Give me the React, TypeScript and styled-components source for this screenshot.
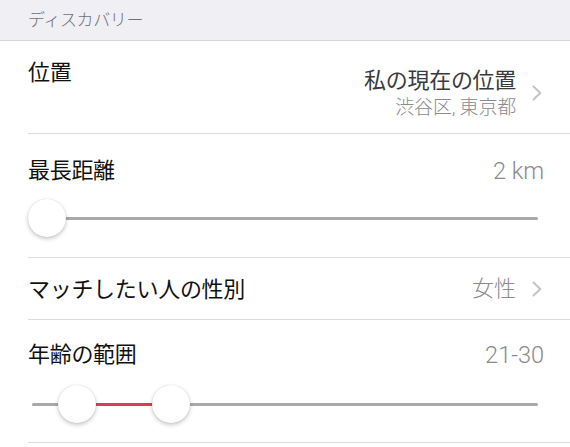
import React from "react";
import styled, { createGlobalStyle } from "styled-components";

const Global = createGlobalStyle`
  html, body { margin: 0; padding: 0; background: #ffffff; }
  body { font-family: Roboto, "Noto Sans CJK JP", "Noto Sans", sans-serif; -webkit-font-smoothing: antialiased; }
  * { box-sizing: border-box; }
`;

const Page = styled.div`
  width: 570px;
  min-height: 447px;
  background: #ffffff;
`;

const SectionHeader = styled.div`
  height: 41px;
  padding: 5px 0 0 28px;
  background: #efeff4;
  border-bottom: 1px solid #d6d6da;
  color: #707075;
  font-size: 17px;
  font-weight: 300;
  line-height: 30px;
  letter-spacing: -0.4px;
`;

const Cell = styled.div<{ $height: number; $padTop: number; $column?: boolean }>`
  margin-left: 28px;
  padding: ${(p) => p.$padTop}px 27px 0 0;
  height: ${(p) => p.$height + 1}px;
  border-bottom: 1px solid #dcdce0;
  display: flex;
  flex-direction: ${(p) => (p.$column ? "column" : "row")};
  align-items: ${(p) => (p.$column ? "stretch" : "flex-start")};
`;

const HeadLine = styled.div`
  display: flex;
  align-items: center;
  justify-content: space-between;
  height: 30px;
`;

const Label = styled.div`
  font-size: 22px;
  line-height: 30px;
  color: #111111;
  flex: 1;
  letter-spacing: -0.3px;
`;

const Value = styled.div<{ $numeric?: boolean }>`
  font-size: ${(p) => (p.$numeric ? 23.5 : 22)}px;
  font-weight: 300;
  line-height: 30px;
  color: #8a8a8f;
  margin-right: ${(p) => (p.$numeric ? -1 : 0)}px;
`;

const Accessory = styled.div<{ $offset?: number }>`
  display: flex;
  align-items: center;
  gap: 16px;
  align-self: center;
  margin-top: ${(p) => p.$offset ?? 0}px;
  margin-right: 1px;
`;

const Stack = styled.div`
  display: flex;
  flex-direction: column;
  align-items: flex-end;
`;

const MainText = styled.div`
  font-size: 22px;
  line-height: 30px;
  color: #3a3a3c;
  letter-spacing: -0.3px;
`;

const SubText = styled.div`
  font-size: 19px;
  font-weight: 300;
  line-height: 24px;
  color: #8a8a8f;
  letter-spacing: -0.2px;
`;

const Chevron = () => (
  <svg width="10" height="16" viewBox="0 0 10 16" fill="none">
    <path d="M1.5 1.5 L8.3 8 L1.5 14.5" stroke="#c4c4c9" strokeWidth="2" strokeLinecap="round" strokeLinejoin="round" />
  </svg>
);

const SliderArea = styled.div<{ $mt: number; $left: number }>`
  position: relative;
  height: 40px;
  margin-top: ${(p) => p.$mt}px;
  margin-left: ${(p) => p.$left}px;
  margin-right: 5px;
  display: flex;
  align-items: center;
`;

const Track = styled.div`
  width: 100%;
  height: 3px;
  border-radius: 1.5px;
  background: #a9a9ab;
`;

const Fill = styled.div`
  position: absolute;
  top: 18.5px;
  height: 3px;
  background: #d9404f;
`;

const Thumb = styled.div`
  position: absolute;
  top: 1px;
  width: 38px;
  height: 38px;
  border-radius: 50%;
  background: #ffffff;
  box-shadow: 0 2px 4px rgba(0, 0, 0, 0.22), 0 0 1px rgba(0, 0, 0, 0.18);
`;

export default function App() {
  return (
    <Page>
      <Global />
      <SectionHeader>ディスカバリー</SectionHeader>

      <Cell $height={92} $padTop={17}>
        <Label>位置</Label>
        <Accessory $offset={-6}>
          <Stack>
            <MainText>私の現在の位置</MainText>
            <SubText>渋谷区, 東京都</SubText>
          </Stack>
          <Chevron />
        </Accessory>
      </Cell>

      <Cell $height={123} $padTop={22} $column>
        <HeadLine>
          <Label>最長距離</Label>
          <Value $numeric>2 km</Value>
        </HeadLine>
        <SliderArea $mt={12} $left={0}>
          <Track />
          <Thumb style={{ left: 0 }} />
        </SliderArea>
      </Cell>

      <Cell $height={61} $padTop={17}>
        <Label>マッチしたい人の性別</Label>
        <Accessory $offset={-17}>
          <Value>女性</Value>
          <Chevron />
        </Accessory>
      </Cell>

      <Cell $height={122} $padTop={20} $column>
        <HeadLine>
          <Label>年齢の範囲</Label>
          <Value $numeric>21-30</Value>
        </HeadLine>
        <SliderArea $mt={14} $left={4}>
          <Track />
          <Fill style={{ left: 45, width: 94 }} />
          <Thumb style={{ left: 26 }} />
          <Thumb style={{ left: 120 }} />
        </SliderArea>
      </Cell>
    </Page>
  );
}
